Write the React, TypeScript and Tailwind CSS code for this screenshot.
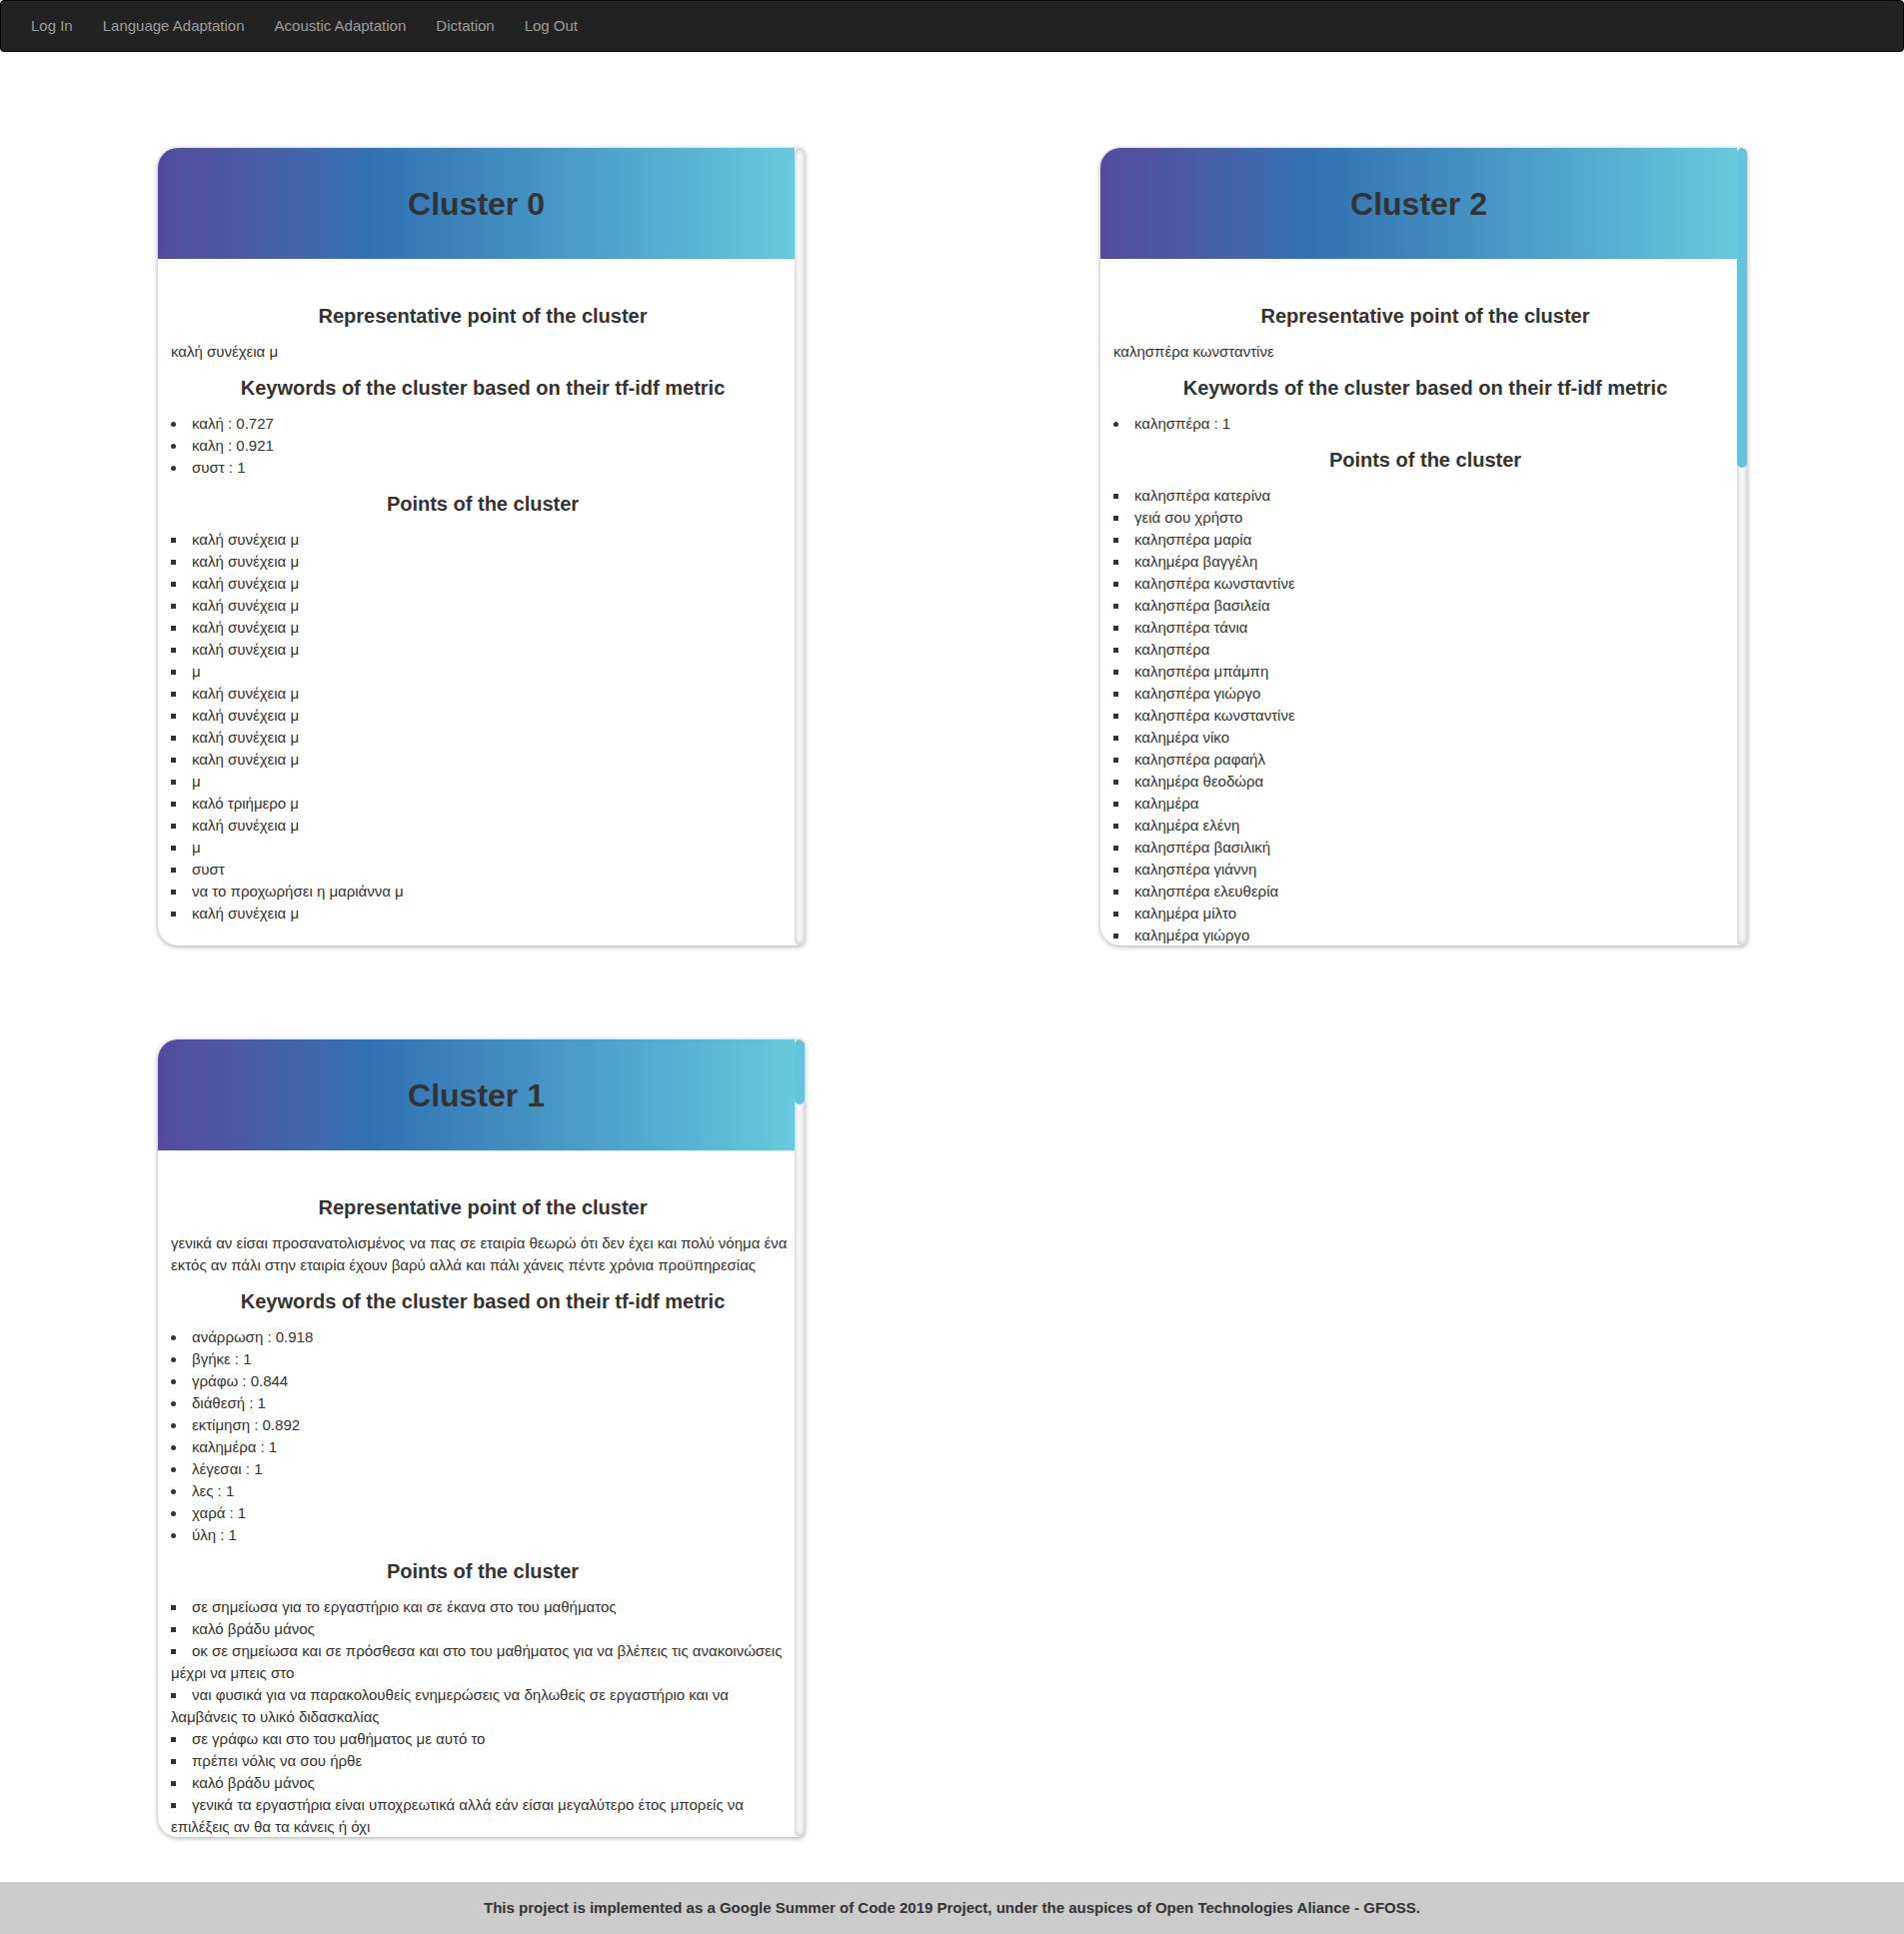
import React from 'react';

type Cluster = {
  id: number;
  representative: string;
  keywords: string[];
  points: string[];
  thumb?: string;
};

const NAV_LINKS = ['Log In', 'Language Adaptation', 'Acoustic Adaptation', 'Dictation', 'Log Out'];

const CLUSTERS: Cluster[] = [
  {
    id: 0,
    representative: 'καλή συνέχεια μ',
    keywords: ['καλή : 0.727', 'καλη : 0.921', 'συστ : 1'],
    points: [
      'καλή συνέχεια μ',
      'καλή συνέχεια μ',
      'καλή συνέχεια μ',
      'καλή συνέχεια μ',
      'καλή συνέχεια μ',
      'καλή συνέχεια μ',
      'μ',
      'καλή συνέχεια μ',
      'καλή συνέχεια μ',
      'καλή συνέχεια μ',
      'καλη συνέχεια μ',
      'μ',
      'καλό τριήμερο μ',
      'καλή συνέχεια μ',
      'μ',
      'συστ',
      'να το προχωρήσει η μαριάννα μ',
      'καλή συνέχεια μ',
    ],
  },
  {
    id: 2,
    representative: 'καλησπέρα κωνσταντίνε',
    keywords: ['καλησπέρα : 1'],
    points: [
      'καλησπέρα κατερίνα',
      'γειά σου χρήστο',
      'καλησπέρα μαρία',
      'καλημέρα βαγγέλη',
      'καλησπέρα κωνσταντίνε',
      'καλησπέρα βασιλεία',
      'καλησπέρα τάνια',
      'καλησπέρα',
      'καλησπέρα μπάμπη',
      'καλησπέρα γιώργο',
      'καλησπέρα κωνσταντίνε',
      'καλημέρα νίκο',
      'καλησπέρα ραφαήλ',
      'καλημέρα θεοδώρα',
      'καλημέρα',
      'καλημέρα ελένη',
      'καλησπέρα βασιλική',
      'καλησπέρα γιάννη',
      'καλησπέρα ελευθερία',
      'καλημέρα μίλτο',
      'καλημέρα γιώργο',
    ],
    thumb: 'h-[320px]',
  },
  {
    id: 1,
    representative:
      'γενικά αν είσαι προσανατολισμένος να πας σε εταιρία θεωρώ ότι δεν έχει και πολύ νόημα ένα εκτός αν πάλι στην εταιρία έχουν βαρύ αλλά και πάλι χάνεις πέντε χρόνια προϋπηρεσίας',
    keywords: [
      'ανάρρωση : 0.918',
      'βγήκε : 1',
      'γράφω : 0.844',
      'διάθεσή : 1',
      'εκτίμηση : 0.892',
      'καλημέρα : 1',
      'λέγεσαι : 1',
      'λες : 1',
      'χαρά : 1',
      'ύλη : 1',
    ],
    points: [
      'σε σημείωσα για το εργαστήριο και σε έκανα στο του μαθήματος',
      'καλό βράδυ μάνος',
      'οκ σε σημείωσα και σε πρόσθεσα και στο του μαθήματος για να βλέπεις τις ανακοινώσεις μέχρι να μπεις στο',
      'ναι φυσικά για να παρακολουθείς ενημερώσεις να δηλωθείς σε εργαστήριο και να λαμβάνεις το υλικό διδασκαλίας',
      'σε γράφω και στο του μαθήματος με αυτό το',
      'πρέπει νόλις να σου ήρθε',
      'καλό βράδυ μάνος',
      'γενικά τα εργαστήρια είναι υποχρεωτικά αλλά εάν είσαι μεγαλύτερο έτος μπορείς να επιλέξεις αν θα τα κάνεις ή όχι',
    ],
    thumb: 'h-[65px]',
  },
];

function SectionTitle({ children }: { children: React.ReactNode }) {
  return (
    <h3 className="mt-[14px] mb-[14px] text-center text-[20px] font-bold leading-[22px]">{children}</h3>
  );
}

function ClusterCard({ cluster }: { cluster: Cluster }) {
  return (
    <div className="h-[798px] flex overflow-hidden bg-white rounded-tl-[20px] rounded-bl-[20px] rounded-r-[6px] shadow-[0_1px_5px_rgba(0,0,0,0.35)]">
      {/* Card content (clipped, scrolls in the original) */}
      <div className="flex-1 min-w-0 overflow-hidden">
        <div className="h-[111px] flex items-center justify-center bg-linear-to-r from-[#544a9e] via-[#3171b3] via-33% to-[#67c9dd]">
          <h1 className="text-[32px] font-bold leading-[36px]">Cluster {cluster.id}</h1>
        </div>

        <div className="pl-[13px] pt-[32px]">
          <SectionTitle>Representative point of the cluster</SectionTitle>
          <p>{cluster.representative}</p>

          <SectionTitle>Keywords of the cluster based on their tf-idf metric</SectionTitle>
          <ul className="list-inside list-disc">
            {cluster.keywords.map((k, i) => (
              <li key={i}>{k}</li>
            ))}
          </ul>

          <SectionTitle>Points of the cluster</SectionTitle>
          <ul className="list-inside list-[square]">
            {cluster.points.map((p, i) => (
              <li key={i}>{p}</li>
            ))}
          </ul>
        </div>
      </div>

      {/* Scrollbar track */}
      <div className="w-[10px] shrink-0 rounded-[5px] shadow-[inset_0_0_6px_rgba(0,0,0,0.3)] flex flex-col">
        {cluster.thumb && <div className={`${cluster.thumb} rounded-[5px] bg-[#63c5dd]`} />}
      </div>
    </div>
  );
}

export default function App() {
  return (
    <div className="min-h-screen bg-white text-[#333] text-[15px] leading-[22px] font-['Liberation_Sans',Arial,sans-serif]">
      {/* Navbar */}
      <nav className="h-[52px] flex px-[15px] bg-[#222] border border-[#080808] rounded-[4px]">
        {NAV_LINKS.map((l) => (
          <a key={l} href="#" className="px-[15px] py-[15px] leading-[20px] text-[#9d9d9d]">
            {l}
          </a>
        ))}
      </nav>

      <main className="pt-[96px] pb-[45px] pl-[158px] grid grid-cols-[647px_647px] gap-x-[296px] gap-y-[94px]">
        {CLUSTERS.map((c) => (
          <ClusterCard key={c.id} cluster={c} />
        ))}
      </main>

      <footer className="h-[52px] flex items-center justify-center bg-[#ccc] font-bold">
        This project is implemented as a Google Summer of Code 2019 Project, under the auspices of Open Technologies Aliance - GFOSS.
      </footer>
    </div>
  );
}
